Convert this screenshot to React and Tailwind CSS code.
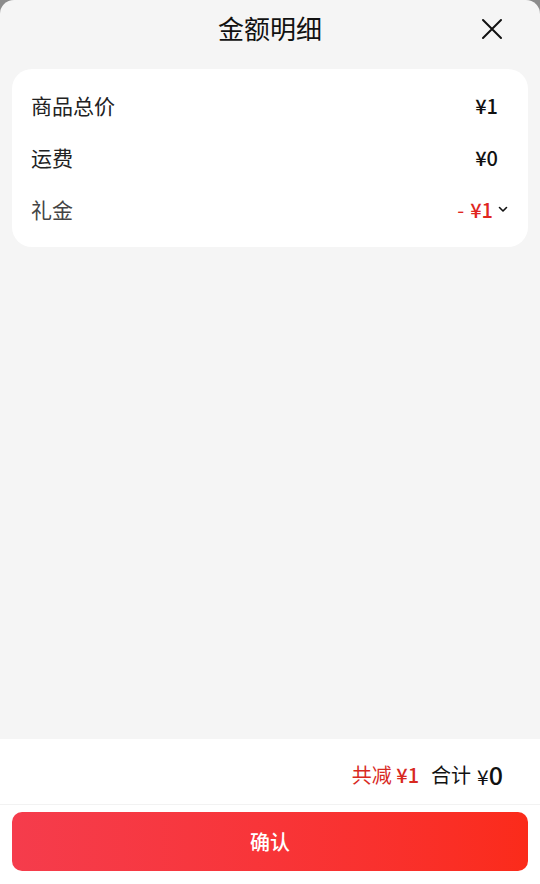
import React from 'react';

const rows = [
  { label: '商品总价', value: '¥1' },
  { label: '运费', value: '¥0' },
];

export default function App() {
  return (
    <div className="w-[540px] h-[884px] bg-[#8c8c8c] overflow-hidden" style={{ fontFamily: '"Noto Sans CJK SC", "Noto Sans", sans-serif' }}>
      <div className="h-full bg-[#f5f5f5] rounded-t-[14px] flex flex-col">
        {/* Header */}
        <div className="relative h-[58px] flex items-center justify-center shrink-0">
          <h1 className="text-[26px] leading-none mb-[2px] text-[#111]">金额明细</h1>
          <button className="absolute right-[37px] top-[18px] text-[#111]">
            <svg width="22" height="22" viewBox="0 0 22 22" fill="none" stroke="currentColor" strokeWidth="2" strokeLinecap="round">
              <path d="M2 2L20 20M20 2L2 20" />
            </svg>
          </button>
        </div>

        {/* Detail card */}
        <div className="mx-3 mt-[11px] bg-white rounded-[20px] px-[19px] py-[11px] flex flex-col">
          {rows.map((r) => (
            <div key={r.label} className="h-[52px] flex items-center justify-between">
              <span className="text-[21px] text-[#222]">{r.label}</span>
              <span className="text-[20px] font-medium text-[#111] mr-[11px]">{r.value}</span>
            </div>
          ))}
          <div className="h-[52px] flex items-center justify-between">
            <span className="text-[21px] text-[#444]">礼金</span>
            <span className="flex items-center text-[20px] font-medium text-[#e0261f]">
              <span className="font-normal mr-[6px]">-</span>
              <span>¥1</span>
              <svg className="ml-[4px] mb-[3px]" width="12" height="12" viewBox="0 0 12 12" fill="none" stroke="#111" strokeWidth="1.6" strokeLinecap="round" strokeLinejoin="round">
                <path d="M2.5 4.5L6 8L9.5 4.5" />
              </svg>
            </span>
          </div>
        </div>

        <div className="flex-1" />

        {/* Footer */}
        <div className="bg-white shrink-0">
          <div className="h-[66px] flex items-center justify-end pr-[37px] pt-[6px] border-b border-[#f2f2f2]">
            <span className="text-[20px] text-[#d8291f]">共减 <span className="font-medium">¥1</span></span>
            <span className="ml-[12px] text-[20px] text-[#111]">合计</span>
            <span className="ml-[6px] text-[21px] text-[#111]">¥<span className="text-[25px] font-medium">0</span></span>
          </div>
          <div className="px-3 pt-[7px] pb-[13px]">
            <button className="w-full h-[59px] rounded-[10px] bg-gradient-to-r from-[#f53c4c] to-[#fb2b1a] text-white text-[20px] font-medium">
              确认
            </button>
          </div>
        </div>
      </div>
    </div>
  );
}
